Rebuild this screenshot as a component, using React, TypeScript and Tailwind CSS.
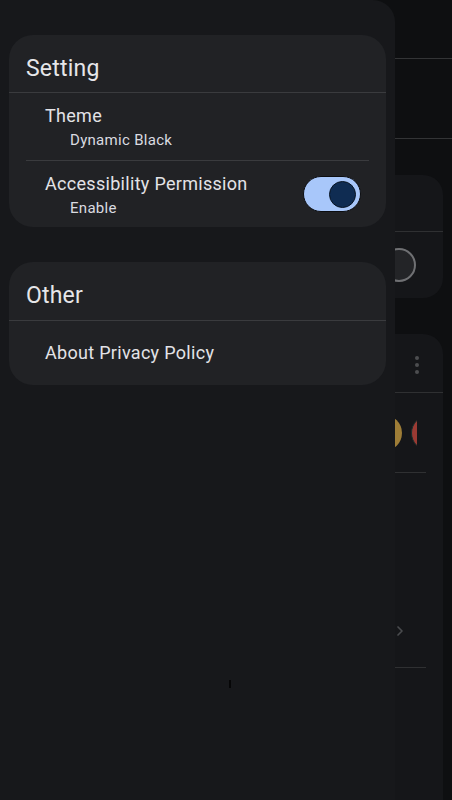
import { ChevronRight } from "lucide-react";

function Divider({ inset = false }: { inset?: boolean }) {
    return <div className={inset ? "mx-[17px] h-px bg-[#3a3b3e]" : "h-px bg-[#3a3b3e]"} />;
}

function Background() {
    return (
        <div className="flex h-full flex-col">
            {/* top bar */}
            <div className="h-[58px] shrink-0" />
            <div className="h-px shrink-0 bg-[#333436]" />
            <div className="h-[79px] shrink-0" />
            <div className="h-px shrink-0 bg-[#333436]" />

            {/* first card */}
            <div className="mx-[9px] mt-[36px] flex h-[123px] shrink-0 flex-col rounded-[20px] bg-[#151619]">
                <div className="h-[56px]" />
                <div className="h-px bg-[#2f3032]" />
                <div className="flex flex-1 items-center pl-[373px]">
                    <div className="h-[34px] w-[34px] rounded-full border-2 border-[#6f7073] bg-[#232427]" />
                </div>
            </div>

            {/* second card */}
            <div className="mx-[9px] mt-[36px] flex flex-1 flex-col rounded-t-[20px] bg-[#151619]">
                <div className="flex h-[58px] items-center justify-end pr-[24px] pt-[4px]">
                    <div className="flex flex-col gap-[3px]">
                        <span className="h-[4px] w-[4px] rounded-full bg-[#4c4d50]" />
                        <span className="h-[4px] w-[4px] rounded-full bg-[#4c4d50]" />
                        <span className="h-[4px] w-[4px] rounded-full bg-[#4c4d50]" />
                    </div>
                </div>
                <div className="h-px bg-[#2f3032]" />
                <div className="flex h-[79px] items-center">
                    <div className="flex w-[408px] gap-[9px] overflow-hidden pl-[312px]">
                        <span className="h-[36px] w-[36px] shrink-0 rounded-full bg-[#3d5f8e]" />
                        <span className="h-[36px] w-[36px] shrink-0 rounded-full bg-[#9e7d37]" />
                        <span className="h-[36px] w-[36px] shrink-0 rounded-full border border-[#16302e] bg-[#9a3a33]" />
                    </div>
                </div>
                <div className="mr-[17px] h-px bg-[#2f3032]" />
                <div className="flex h-[194px] flex-col justify-end pb-[28px] pl-[383px]">
                    <ChevronRight className="h-[16px] w-[16px] text-[#4a4b4e]" strokeWidth={2.5} />
                </div>
                <div className="mr-[17px] h-px bg-[#2f3032]" />
            </div>
        </div>
    );
}

function Toggle() {
    return (
        <div className="flex h-[36px] w-[58px] items-center justify-end rounded-full border border-[#0c0d10] bg-[#a8c7fa] pr-[4px]">
            <div className="h-[27px] w-[27px] rounded-full border border-[#081422] bg-[#0f2c52]" />
        </div>
    );
}

export default function App() {
    return (
        <div className="relative h-[800px] w-[452px] overflow-hidden bg-[#0e0f11] font-['Roboto',sans-serif]">
            <Background />

            {/* Drawer */}
            <aside className="absolute left-0 top-0 flex h-full w-[395px] flex-col gap-[35px] rounded-tr-[22px] bg-[#17181b] px-[9px] pt-[35px]">
                {/* Setting */}
                <section className="rounded-[24px] bg-[#212225]">
                    <div className="h-[57px] px-[17px] pt-[20px] text-[23px] leading-[28px] tracking-[0.2px] text-[#e6e6e9]">Setting</div>
                    <Divider />
                    <div className="pb-[10px] pl-[36px] pt-[13px]">
                        <div className="text-[18px] leading-[20px] tracking-[0.3px] text-[#e3e3e7]">Theme</div>
                        <div className="mt-[4px] pl-[25px] text-[15px] leading-[20px] tracking-[0.3px] text-[#dadbe0]">Dynamic Black</div>
                    </div>
                    <Divider inset />
                    <div className="flex items-center justify-between pl-[36px] pr-[25px]">
                        <div className="pb-[9px] pt-[13px]">
                            <div className="text-[18px] leading-[20px] tracking-[0.3px] text-[#e3e3e7]">Accessibility Permission</div>
                            <div className="mt-[4px] pl-[25px] text-[15px] leading-[20px] tracking-[0.3px] text-[#dadbe0]">Enable</div>
                        </div>
                        <Toggle />
                    </div>
                </section>

                {/* Other */}
                <section className="rounded-[24px] bg-[#212225]">
                    <div className="h-[58px] px-[17px] pt-[20px] text-[23px] leading-[28px] tracking-[0.2px] text-[#e6e6e9]">Other</div>
                    <Divider />
                    <div className="py-[22px] pl-[36px] text-[18px] leading-[20px] tracking-[0.3px] text-[#e3e3e7]">About Privacy Policy</div>
                </section>

                <span className="absolute left-[229px] top-[680px] h-[8px] w-[2px] bg-[#060607]" />
            </aside>
        </div>
    );
}
